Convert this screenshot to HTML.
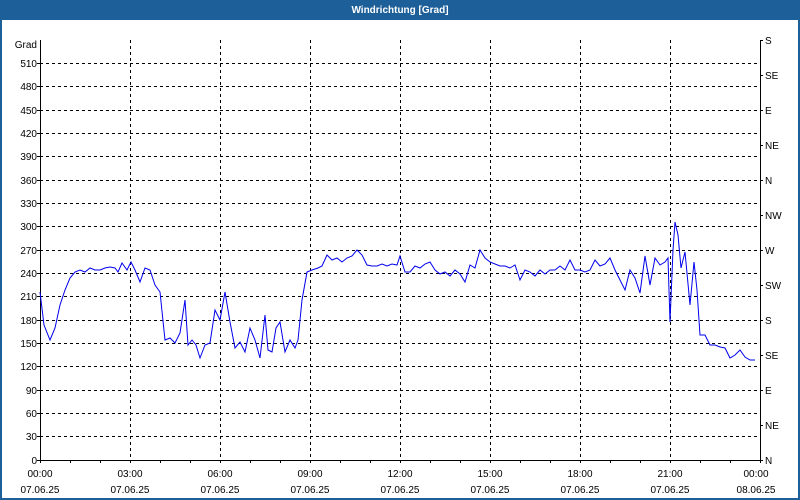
<!DOCTYPE html>
<html><head><style>
html,body{margin:0;padding:0;width:800px;height:500px;overflow:hidden;background:#fff}
svg text{font-family:"Liberation Sans",sans-serif;font-size:10px;fill:#000}
</style></head><body>
<svg width="800" height="500" xmlns="http://www.w3.org/2000/svg">
<rect x="0" y="0" width="800" height="500" fill="#1d5f98"/>
<rect x="2" y="20" width="796" height="478" fill="#fff"/>
<text x="400" y="13" text-anchor="middle" style="fill:#fff;font-weight:bold;font-size:10px">Windrichtung [Grad]</text>
<g stroke="#000" stroke-dasharray="3,3" stroke-width="1">
<path d="M40 63.5H760M40 86.5H760M40 110.5H760M40 133.5H760M40 156.5H760M40 180.5H760M40 203.5H760M40 226.5H760M40 250.5H760M40 273.5H760M40 296.5H760M40 320.5H760M40 343.5H760M40 366.5H760M40 390.5H760M40 413.5H760M40 436.5H760"/>
<path d="M130.5 40V460M220.5 40V460M310.5 40V460M400.5 40V460M490.5 40V460M580.5 40V460M670.5 40V460"/>
</g>
<g stroke="#000" stroke-width="1" fill="none">
<path d="M40.5 40V460.5H760.5V40"/>
<path d="M37 63.5h3M37 86.5h3M37 110.5h3M37 133.5h3M37 156.5h3M37 180.5h3M37 203.5h3M37 226.5h3M37 250.5h3M37 273.5h3M37 296.5h3M37 320.5h3M37 343.5h3M37 366.5h3M37 390.5h3M37 413.5h3M37 436.5h3M37 460.5h3"/>
<path d="M760 40.5h3M760 75.5h3M760 110.5h3M760 145.5h3M760 180.5h3M760 215.5h3M760 250.5h3M760 285.5h3M760 320.5h3M760 355.5h3M760 390.5h3M760 425.5h3M760 460.5h3"/>
<path d="M70.5 460v3M100.5 460v3M130.5 460v3M160.5 460v3M190.5 460v3M220.5 460v3M250.5 460v3M280.5 460v3M310.5 460v3M340.5 460v3M370.5 460v3M400.5 460v3M430.5 460v3M460.5 460v3M490.5 460v3M520.5 460v3M550.5 460v3M580.5 460v3M610.5 460v3M640.5 460v3M670.5 460v3M700.5 460v3M730.5 460v3M40.5 460v3M760.5 460v3"/>
</g>
<g text-anchor="end">
<text x="37" y="48">Grad</text>
<text x="37" y="67">510</text><text x="37" y="90">480</text><text x="37" y="114">450</text><text x="37" y="137">420</text><text x="37" y="160">390</text><text x="37" y="184">360</text><text x="37" y="207">330</text><text x="37" y="230">300</text><text x="37" y="254">270</text><text x="37" y="277">240</text><text x="37" y="300">210</text><text x="37" y="324">180</text><text x="37" y="347">150</text><text x="37" y="370">120</text><text x="37" y="394">90</text><text x="37" y="417">60</text><text x="37" y="440">30</text><text x="37" y="464">0</text>
</g>
<g>
<text x="765" y="44">S</text><text x="765" y="79">SE</text><text x="765" y="114">E</text><text x="765" y="149">NE</text><text x="765" y="184">N</text><text x="765" y="219">NW</text><text x="765" y="254">W</text><text x="765" y="289">SW</text><text x="765" y="324">S</text><text x="765" y="359">SE</text><text x="765" y="394">E</text><text x="765" y="429">NE</text><text x="765" y="464">N</text>
</g>
<g text-anchor="middle">
<text x="40" y="477">00:00</text><text x="130" y="477">03:00</text><text x="220" y="477">06:00</text><text x="310" y="477">09:00</text><text x="400" y="477">12:00</text><text x="490" y="477">15:00</text><text x="580" y="477">18:00</text><text x="670" y="477">21:00</text><text x="756" y="477">00:00</text>
<text x="40" y="493">07.06.25</text><text x="130" y="493">07.06.25</text><text x="220" y="493">07.06.25</text><text x="310" y="493">07.06.25</text><text x="400" y="493">07.06.25</text><text x="490" y="493">07.06.25</text><text x="580" y="493">07.06.25</text><text x="670" y="493">07.06.25</text><text x="756" y="493">08.06.25</text>
</g>
<polyline fill="none" stroke="#0000ee" stroke-width="1" points="40,292 44,325 50,340 55,328 60,305 65,290 70,278 75,272 80,270 85,272 90,268 95,270 100,270 105,268 110,267 115,268 118,272 122,263 127,270 131,262 135,270 140,282 145,268 150,270 155,285 160,292 165,340 170,338 175,343 180,333 185,300 188,345 192,340 196,345 200,358 205,345 210,343 215,310 220,320 225,292 230,322 235,348 240,342 245,352 250,328 255,340 260,358 265,315 268,350 272,352 276,328 280,322 285,352 290,340 295,348 298,340 302,300 307,272 312,270 318,268 322,266 327,255 332,260 337,258 342,262 347,258 352,256 357,250 362,255 367,265 372,266 377,266 382,264 387,266 392,264 397,265 400,256 405,272 410,272 415,266 420,268 425,264 430,262 435,270 440,274 445,272 450,276 455,270 460,274 465,282 470,265 475,268 480,250 485,258 490,262 495,264 500,266 505,266 510,268 515,265 520,280 525,270 530,272 535,276 540,270 545,274 550,270 555,270 560,266 565,270 570,260 575,270 580,270 585,272 590,270 595,260 600,266 605,264 610,258 615,270 620,280 625,290 630,270 635,278 640,293 645,256 650,285 655,258 660,265 665,262 668,258 670,322 673,250 675,222 678,235 681,268 685,252 690,305 694,262 697,290 700,335 705,335 710,345 715,345 720,347 725,348 730,358 735,355 740,350 745,357 750,360 755,360"/>
</svg>
</body></html>
